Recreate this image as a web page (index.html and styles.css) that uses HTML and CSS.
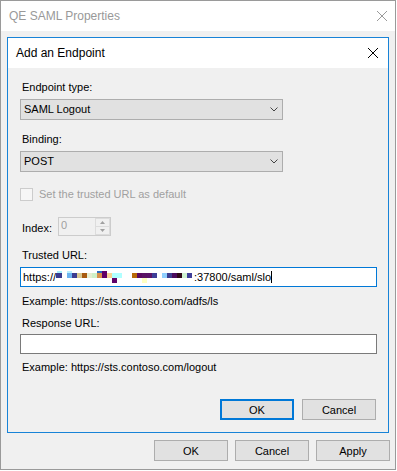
FILE: index.html
```html
<!DOCTYPE html>
<html lang="en">
<head>
    <meta charset="UTF-8">
    <title>QE SAML Properties</title>
    <link rel="stylesheet" href="styles.css">
</head>
<body>
    <div class="window">
        <div class="window-title">
            <span>QE SAML Properties</span>
            <svg class="close-icon" width="10" height="10" viewBox="0 0 10 10">
                <path d="M0 0L10 10M10 0L0 10" stroke="#9a9a9a" stroke-width="1"/>
            </svg>
        </div>

        <div class="window-body">
            <div class="dialog">
                <div class="dialog-title">
                    <span>Add an Endpoint</span>
                    <svg class="close-icon" width="10" height="10" viewBox="0 0 10 10">
                        <path d="M0 0L10 10M10 0L0 10" stroke="#000" stroke-width="1"/>
                    </svg>
                </div>

                <div class="dialog-body">
                    <div class="field-label">Endpoint type:</div>
                    <div class="select">
                        <span>SAML Logout</span>
                        <svg class="chevron" width="8" height="5" viewBox="0 0 8 5">
                            <polyline points="0.5,0.5 4,4 7.5,0.5" fill="none" stroke="#444" stroke-width="1"/>
                        </svg>
                    </div>

                    <div class="field-label gap-lg">Binding:</div>
                    <div class="select">
                        <span>POST</span>
                        <svg class="chevron" width="8" height="5" viewBox="0 0 8 5">
                            <polyline points="0.5,0.5 4,4 7.5,0.5" fill="none" stroke="#444" stroke-width="1"/>
                        </svg>
                    </div>

                    <div class="check-row disabled">
                        <span class="checkbox"></span>
                        <span>Set the trusted URL as default</span>
                    </div>

                    <div class="index-row">
                        <span class="field-label">Index:</span>
                        <div class="spinbox">
                            <span class="spin-value">0</span>
                            <div class="spin-buttons">
                                <span class="spin-btn">
                                    <svg width="5" height="3" viewBox="0 0 5 3"><polygon points="2.5,0 5,3 0,3" fill="#a0a0a0"/></svg>
                                </span>
                                <span class="spin-btn">
                                    <svg width="5" height="3" viewBox="0 0 5 3"><polygon points="0,0 5,0 2.5,3" fill="#a0a0a0"/></svg>
                                </span>
                            </div>
                        </div>
                    </div>

                    <div class="field-label gap-lg">Trusted URL:</div>
                    <div class="text-input focused">https://<svg class="mosaic" width="138" height="16" viewBox="0 0 138 16">
                            <rect x="1" y="3" width="5" height="2" fill="#a8f0ff"/>
                            <rect x="11" y="3" width="5" height="2" fill="#b8f0ff"/>
                            <rect x="41" y="3" width="5" height="2" fill="#2a6cc0"/>
                            <rect x="46" y="3" width="5" height="2" fill="#600068"/>
                            <rect x="0" y="5" width="6" height="5" fill="#3b3b8f"/>
                            <rect x="11" y="5" width="5" height="5" fill="#6cb4f0"/>
                            <rect x="16" y="5" width="5" height="5" fill="#3c3c90"/>
                            <rect x="21" y="5" width="5" height="5" fill="#d8c890"/>
                            <rect x="26" y="5" width="5" height="5" fill="#a85a10"/>
                            <rect x="31" y="5" width="5" height="5" fill="#e6eed0"/>
                            <rect x="36" y="5" width="5" height="5" fill="#cff0c8"/>
                            <rect x="41" y="5" width="5" height="5" fill="#d8904c"/>
                            <rect x="46" y="5" width="5" height="5" fill="#600068"/>
                            <rect x="51" y="5" width="5" height="5" fill="#f8d494"/>
                            <rect x="56" y="5" width="10" height="5" fill="#b0ffff"/>
                            <rect x="76" y="5" width="5" height="5" fill="#b86a08"/>
                            <rect x="81" y="5" width="5" height="5" fill="#5c0a60"/>
                            <rect x="86" y="5" width="5" height="5" fill="#5a1464"/>
                            <rect x="91" y="5" width="5" height="5" fill="#5a1468"/>
                            <rect x="96" y="5" width="5" height="5" fill="#3e3e98"/>
                            <rect x="106" y="5" width="5" height="5" fill="#90d0ff"/>
                            <rect x="111" y="5" width="5" height="5" fill="#3e3e90"/>
                            <rect x="116" y="5" width="5" height="5" fill="#4a0a5c"/>
                            <rect x="121" y="5" width="5" height="5" fill="#300818"/>
                            <rect x="126" y="5" width="5" height="5" fill="#d0f2d0"/>
                            <rect x="131" y="5" width="5" height="5" fill="#40409a"/>
                            <rect x="56" y="10" width="5" height="5" fill="#600068"/>
                            <rect x="86" y="10" width="5" height="5" fill="#ffffc0"/>
                        </svg>:37800/saml/slo<span class="caret"></span></div>
                    <div class="field-label hint">Example: https://sts.contoso.com/adfs/ls</div>

                    <div class="field-label gap-md">Response URL:</div>
                    <div class="text-input tight"></div>
                    <div class="field-label hint-sm">Example: https://sts.contoso.com/logout</div>

                    <div class="button-row dialog-buttons">
                        <button class="btn default">OK</button>
                        <button class="btn">Cancel</button>
                    </div>
                </div>
            </div>

            <div class="button-row window-buttons">
                <button class="btn">OK</button>
                <button class="btn">Cancel</button>
                <button class="btn">Apply</button>
            </div>
        </div>
    </div>
</body>
</html>
```

FILE: styles.css
```css
body {
    margin: 0;
    font-family: "Liberation Sans", Arial, sans-serif;
    font-size: 11px;
    line-height: 15px;
    color: #000;
    background-color: #fff;
}
.window {
    width: 396px;
    height: 470px;
    box-sizing: border-box;
    border: 1px solid #9a9a9a;
    background-color: #f0f0f0;
    display: flex;
    flex-direction: column;
}
.window-title {
    height: 30px;
    flex-shrink: 0;
    background-color: #fff;
    display: flex;
    align-items: center;
    justify-content: space-between;
    padding: 0 8px;
    font-size: 12px;
    line-height: 30px;
    color: #999;
}
.window-body {
    padding: 6px 6px 8px;
    display: flex;
    flex-direction: column;
}
.dialog {
    border: 1px solid #1883d7;
    background-color: #f0f0f0;
}
.dialog-title {
    height: 30px;
    background-color: #fff;
    display: flex;
    align-items: center;
    justify-content: space-between;
    padding: 0 10px 0 8px;
    font-size: 12px;
    line-height: 30px;
}
.close-icon {
    display: block;
}
.dialog-body {
    padding: 12px 11px 12px 12px;
    display: flex;
    flex-direction: column;
}
.field-label {
    margin-left: 2px;
}
.gap-lg {
    margin-top: 12px;
}
.gap-md {
    margin-top: 7px;
}
.hint {
    margin-top: 7px;
}
.hint-sm {
    margin-top: 6px;
}
.select {
    width: 263px;
    height: 21px;
    box-sizing: border-box;
    margin-top: 4px;
    border: 1px solid #adadad;
    background-color: #e1e1e1;
    display: flex;
    align-items: center;
    justify-content: space-between;
    padding: 0 4px 0 3px;
    line-height: 19px;
}
.chevron {
    display: block;
}
.check-row {
    margin-top: 15px;
    display: flex;
    align-items: center;
    gap: 6px;
}
.check-row.disabled {
    color: #a0a0a0;
}
.checkbox {
    width: 13px;
    height: 13px;
    box-sizing: border-box;
    border: 1px solid #cccccc;
    background-color: #f6f6f6;
}
.index-row {
    margin-top: 15px;
    display: flex;
    align-items: flex-end;
    gap: 6px;
}
.spinbox {
    width: 53px;
    height: 19px;
    box-sizing: border-box;
    border: 1px solid #cccccc;
    background-color: #f0f0f0;
    display: flex;
    justify-content: space-between;
}
.spin-value {
    padding-left: 2px;
    color: #a0a0a0;
}
.spin-buttons {
    width: 15px;
    display: flex;
    flex-direction: column;
}
.spin-btn {
    flex: 1;
    box-sizing: border-box;
    border: 1px solid #dcdcdc;
    display: flex;
    align-items: center;
    justify-content: center;
}
.spin-btn + .spin-btn {
    border-top: none;
}
.spin-btn svg {
    display: block;
}
.text-input {
    height: 20px;
    box-sizing: border-box;
    margin-top: 4px;
    border: 1px solid #7a7a7a;
    background-color: #fff;
    padding: 0 2px;
    line-height: 18px;
    white-space: nowrap;
}
.text-input.tight {
    margin-top: 3px;
}
.text-input.focused {
    border-color: #0078d7;
}
.mosaic {
    vertical-align: top;
}
.caret {
    display: inline-block;
    width: 1px;
    height: 12px;
    background-color: #000;
    vertical-align: -2px;
}
.button-row {
    display: flex;
    justify-content: flex-end;
}
.dialog-buttons {
    margin-top: 24px;
    gap: 8px;
    padding-right: 1px;
}
.window-buttons {
    margin-top: 7px;
    gap: 7px;
    margin-right: -1px;
}
.btn {
    width: 74px;
    height: 21px;
    box-sizing: border-box;
    padding: 0;
    border: 1px solid #adadad;
    background-color: #e1e1e1;
    font-family: inherit;
    font-size: 11px;
    color: #000;
}
.btn.default {
    border: 2px solid #0078d7;
}
```
